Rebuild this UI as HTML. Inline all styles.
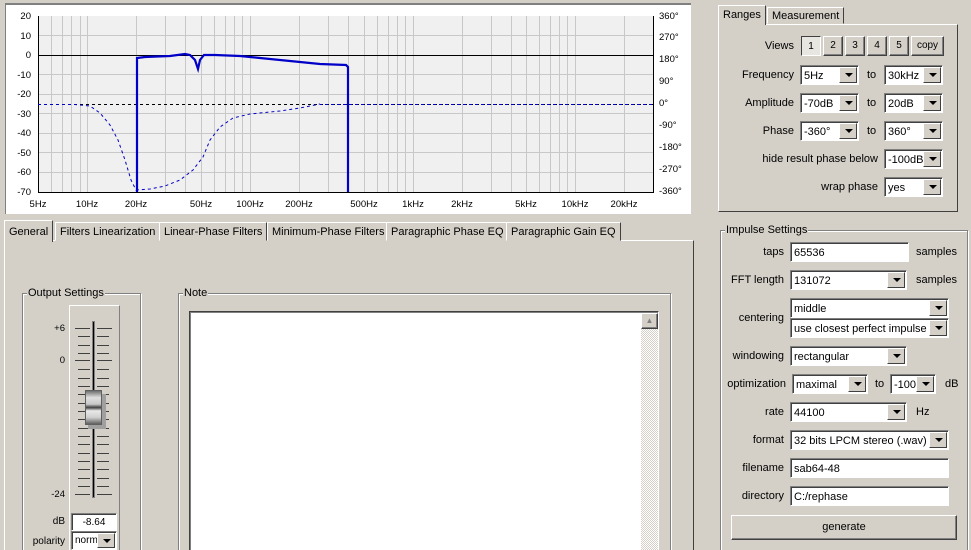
<!DOCTYPE html>
<html><head><meta charset="utf-8"><style>
*{box-sizing:border-box}
html,body{margin:0;padding:0;width:971px;height:550px;overflow:hidden}
#w{position:relative;width:971px;height:550px;overflow:hidden;background:#d4d0c8;font-family:"Liberation Sans",sans-serif;font-size:11px;color:#000}
.a{position:absolute}
.lbl{position:absolute;text-align:right;white-space:nowrap}
.inp,.sel{position:absolute;background:#fff;border:1px solid;border-color:#808080 #fff #fff #808080;box-shadow:inset 1px 1px 0 #404040;padding:4px 3px 0;white-space:nowrap;overflow:hidden}
.sel:after{content:"";position:absolute;right:1px;top:1px;bottom:1px;width:16px;background:#d4d0c8;border:1px solid;border-color:#fff #404040 #404040 #fff}
.sel i{position:absolute;right:5px;top:50%;margin-top:-2px;border-left:4px solid transparent;border-right:4px solid transparent;border-top:4px solid #000;z-index:2}
.btn{position:absolute;background:#d4d0c8;border:1px solid;border-color:#fff #404040 #404040 #fff;box-shadow:inset -1px -1px 0 #808080;text-align:center;font-size:10px}
.grp{position:absolute;border:1px solid #808080;box-shadow:1px 1px 0 #fff inset,1px 1px 0 #fff}
.grp span{position:absolute;top:-7px;left:4px;background:#d4d0c8;padding:0 1px}
.tab{position:absolute;top:222px;height:19px;border:1px solid;border-color:#fff #404040 transparent #fff;padding:3px 4px 0;white-space:nowrap;background:#d4d0c8}
</style></head><body><div id="w">
<div class="a" style="left:5px;top:3px;width:686px;height:211px;background:#fff;border-top:2px solid #808080;border-left:1px solid #808080"></div>
<svg class="a" style="left:0;top:0" width="700" height="215" font-family="Liberation Sans" font-size="9.5">
<rect x="38" y="16" width="616" height="176" fill="#f0f0f0"/>
<g stroke="#c8c8c8" stroke-width="1">
<path d="M51.5 16V192M62.5 16V192M71.5 16V192M80.5 16V192M87.5 16V192M136.5 16V192M165.5 16V192M185.5 16V192M201.5 16V192M214.5 16V192M225.5 16V192M234.5 16V192M242.5 16V192M250.5 16V192M299.5 16V192M328.5 16V192M348.5 16V192M364.5 16V192M377.5 16V192M388.5 16V192M397.5 16V192M405.5 16V192M413.5 16V192M462.5 16V192M491.5 16V192M511.5 16V192M526.5 16V192M539.5 16V192M550.5 16V192M559.5 16V192M567.5 16V192M575.5 16V192M624.5 16V192"/>
<path d="M38 35.5H654M38 74.5H654M38 94.5H654M38 113.5H654M38 133.5H654M38 152.5H654M38 172.5H654"/>
</g>
<path d="M38 55.5H654" stroke="#000"/>
<path d="M38.5 16V192.5H653.5V16" fill="none" stroke="#000"/>
<path d="M38 104.5H654" stroke="#000" stroke-dasharray="3,3"/>
<path d="M38 104.5H75L90 106L100 113L110 125L118 140L125 160L131 180L136 190L150 189L165 186L180 180L193 170L203 157L210 140L220 127L233 118L250 114L280 111L300 108L320 104" fill="none" stroke="#0000c8" stroke-dasharray="3,3"/>
<path d="M320 104.5H654" stroke="#0000c8" stroke-dasharray="3,3" stroke-dashoffset="1"/>
<path d="M137 192V58L145 57L170 56L185 54L190 55L195 60L198 69L200 60L204 55L215 55L240 56L260 58L280 60L300 62L320 64L346 65L348 67V192" fill="none" stroke="#0000c8" stroke-width="2.2"/>
<g text-anchor="end"><text x="31" y="19">20</text><text x="31" y="39">10</text><text x="31" y="58">0</text><text x="31" y="78">-10</text><text x="31" y="97">-20</text><text x="31" y="117">-30</text><text x="31" y="136">-40</text><text x="31" y="156">-50</text><text x="31" y="175">-60</text><text x="31" y="195">-70</text></g>
<g><text x="659" y="19">360°</text><text x="659" y="40">270°</text><text x="659" y="62">180°</text><text x="659" y="84">90°</text><text x="659" y="106">0°</text><text x="659" y="128">-90°</text><text x="659" y="150">-180°</text><text x="659" y="172">-270°</text><text x="659" y="194">-360°</text></g>
<g text-anchor="middle"><text x="38" y="207">5Hz</text><text x="87" y="207">10Hz</text><text x="136" y="207">20Hz</text><text x="201" y="207">50Hz</text><text x="250" y="207">100Hz</text><text x="299" y="207">200Hz</text><text x="364" y="207">500Hz</text><text x="413" y="207">1kHz</text><text x="462" y="207">2kHz</text><text x="526" y="207">5kHz</text><text x="575" y="207">10kHz</text><text x="624" y="207">20kHz</text></g>
</svg>

<div class="a" style="left:718px;top:24px;width:240px;height:188px;border:1px solid;border-color:#fff #404040 #404040 #fff"></div>
<div class="tab" style="left:718px;top:5px;height:20px;border-bottom:none;z-index:2">Ranges</div>
<div class="tab" style="left:767px;top:7px;height:17px;padding-top:2px">Measurement</div>
<div class="lbl" style="left:700px;width:94px;top:40px">Views</div>
<div class="btn" style="left:801px;top:36px;width:20px;height:20px;padding-top:4px;background:#e8e6e0;border-color:#404040 #fff #fff #404040;box-shadow:none">1</div>
<div class="btn" style="left:823px;top:36px;width:20px;height:20px;padding-top:3px">2</div>
<div class="btn" style="left:845px;top:36px;width:20px;height:20px;padding-top:3px">3</div>
<div class="btn" style="left:867px;top:36px;width:20px;height:20px;padding-top:3px">4</div>
<div class="btn" style="left:889px;top:36px;width:20px;height:20px;padding-top:3px">5</div>
<div class="btn" style="left:911px;top:36px;width:33px;height:20px;padding-top:3px">copy</div>
<div class="lbl" style="left:700px;width:94px;top:69px">Frequency</div>
<div class="sel" style="left:800px;top:65px;width:59px;height:20px">5Hz<i></i></div>
<div class="a" style="left:867px;top:69px">to</div>
<div class="sel" style="left:884px;top:65px;width:59px;height:20px">30kHz<i></i></div>
<div class="lbl" style="left:700px;width:94px;top:97px">Amplitude</div>
<div class="sel" style="left:800px;top:93px;width:59px;height:20px">-70dB<i></i></div>
<div class="a" style="left:867px;top:97px">to</div>
<div class="sel" style="left:884px;top:93px;width:59px;height:20px">20dB<i></i></div>
<div class="lbl" style="left:700px;width:94px;top:125px">Phase</div>
<div class="sel" style="left:800px;top:121px;width:59px;height:20px">-360°<i></i></div>
<div class="a" style="left:867px;top:125px">to</div>
<div class="sel" style="left:884px;top:121px;width:59px;height:20px">360°<i></i></div>
<div class="lbl" style="left:700px;width:178px;top:153px">hide result phase below</div>
<div class="sel" style="left:884px;top:149px;width:59px;height:20px">-100dB<i></i></div>
<div class="lbl" style="left:700px;width:178px;top:181px">wrap phase</div>
<div class="sel" style="left:884px;top:177px;width:59px;height:20px">yes<i></i></div>

<div class="a" style="left:4px;top:240px;width:690px;height:320px;border:1px solid;border-color:#fff #404040 #404040 #fff"></div>
<div class="tab" style="left:4px;top:220px;height:22px;border-bottom:none;z-index:2;padding-top:5px">General</div>
<div class="tab" style="left:55px">Filters Linearization</div>
<div class="tab" style="left:159px">Linear-Phase Filters</div>
<div class="tab" style="left:267px">Minimum-Phase Filters</div>
<div class="tab" style="left:386px">Paragraphic Phase EQ</div>
<div class="tab" style="left:506px">Paragraphic Gain EQ</div>

<div class="grp" style="left:22px;top:293px;width:119px;height:270px"><span>Output Settings</span></div>
<div class="a" style="left:69px;top:305px;width:51px;height:250px;border:1px solid;border-color:#fff #808080 #808080 #fff"></div>
<svg class="a" style="left:40px;top:315px" width="80" height="190" font-family="Liberation Sans" font-size="9.5">
<g stroke="#404040"><path d="M35 13.5H50M57 13.5H72M38 21.5H50M57 21.5H69M38 30.5H50M57 30.5H69M38 38.5H50M57 38.5H69M35 45.5H50M57 45.5H72M38 54.5H50M57 54.5H69M38 63.5H50M57 63.5H69M38 71.5H50M57 71.5H69M38 79.5H50M57 79.5H69M38 88.5H50M57 88.5H69M38 96.5H50M57 96.5H69M38 104.5H50M57 104.5H69M38 113.5H50M57 113.5H69M38 121.5H50M57 121.5H69M38 129.5H50M57 129.5H69M38 138.5H50M57 138.5H69M38 146.5H50M57 146.5H69M38 154.5H50M57 154.5H69M38 163.5H50M57 163.5H69M38 171.5H50M57 171.5H69M35 179.5H50M57 179.5H72"/></g>
<rect x="52.5" y="6.5" width="2" height="176" fill="#000" stroke="#808080"/>
<text x="25" y="16" text-anchor="end">+6</text><text x="25" y="48" text-anchor="end">0</text><text x="25" y="182" text-anchor="end">-24</text>
</svg>
<div class="a" style="left:88px;top:394px;width:18px;height:35px;background:#a0a0a0"></div>
<div class="a" style="left:85px;top:390px;width:17px;height:35px;background:linear-gradient(#707070,#e0e0e0 20%,#c8c8c8 40%,#404040 50%,#e8e8e8 60%,#d0d0d0 80%,#606060);border:1px solid #606060"></div>
<div class="lbl" style="left:40px;width:25px;top:516px;font-size:10px">dB</div>
<div class="inp" style="left:71px;top:513px;width:46px;height:18px;text-align:center;font-size:10px;padding-top:3px">-8.64</div>
<div class="lbl" style="left:20px;width:45px;top:536px;font-size:10px">polarity</div>
<div class="sel" style="left:71px;top:531px;width:46px;height:19px;font-size:10px;padding-top:3px">norm<i></i></div>

<div class="grp" style="left:178px;top:293px;width:493px;height:270px"><span>Note</span></div>
<div class="a" style="left:189px;top:311px;width:470px;height:250px;background:#fff;border:1px solid;border-color:#404040 #fff #fff #404040;box-shadow:inset 1px 1px 0 #808080"></div>
<div class="a" style="left:641px;top:313px;width:17px;height:237px;background:repeating-conic-gradient(#fff 0 25%,#d4d0c8 0 50%) 0 0/2px 2px"></div>
<div class="btn" style="left:641px;top:313px;width:17px;height:16px;font-size:8px;color:#808080;line-height:13px">▲</div>

<div class="grp" style="left:720px;top:230px;width:248px;height:330px"><span>Impulse Settings</span></div>
<div class="lbl" style="left:700px;width:84px;top:246px">taps</div>
<div class="inp" style="left:790px;top:242px;width:119px;height:20px">65536</div>
<div class="a" style="left:916px;top:246px">samples</div>
<div class="lbl" style="left:700px;width:84px;top:274px">FFT length</div>
<div class="sel" style="left:790px;top:270px;width:117px;height:20px">131072<i></i></div>
<div class="a" style="left:916px;top:274px">samples</div>
<div class="lbl" style="left:700px;width:84px;top:312px">centering</div>
<div class="sel" style="left:790px;top:298px;width:159px;height:20px">middle<i></i></div>
<div class="sel" style="left:790px;top:318px;width:159px;height:20px">use closest perfect impulse<i></i></div>
<div class="lbl" style="left:700px;width:84px;top:350px">windowing</div>
<div class="sel" style="left:790px;top:346px;width:117px;height:20px">rectangular<i></i></div>
<div class="lbl" style="left:700px;width:86px;top:378px">optimization</div>
<div class="sel" style="left:792px;top:374px;width:76px;height:20px">maximal<i></i></div>
<div class="a" style="left:875px;top:378px">to</div>
<div class="sel" style="left:890px;top:374px;width:46px;height:20px">-100<i></i></div>
<div class="a" style="left:945px;top:378px">dB</div>
<div class="lbl" style="left:700px;width:84px;top:406px">rate</div>
<div class="sel" style="left:790px;top:402px;width:117px;height:20px">44100<i></i></div>
<div class="a" style="left:916px;top:406px">Hz</div>
<div class="lbl" style="left:700px;width:84px;top:434px">format</div>
<div class="sel" style="left:790px;top:430px;width:159px;height:20px">32 bits LPCM stereo (.wav)<i></i></div>
<div class="lbl" style="left:700px;width:84px;top:462px">filename</div>
<div class="inp" style="left:790px;top:458px;width:159px;height:20px">sab64-48</div>
<div class="lbl" style="left:700px;width:84px;top:490px">directory</div>
<div class="inp" style="left:790px;top:486px;width:159px;height:20px">C:/rephase</div>
<div class="btn" style="left:731px;top:515px;width:226px;height:25px;font-size:11px;padding-top:5px">generate</div>
</div></body></html>
